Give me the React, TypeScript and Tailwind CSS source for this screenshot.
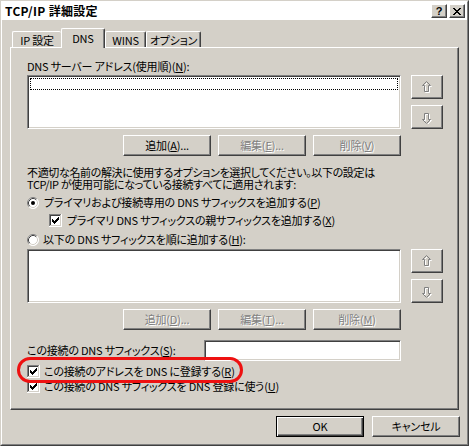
import React from "react";

const raised =
  "border border-t-white border-l-white border-r-[#404040] border-b-[#404040] shadow-[inset_-1px_-1px_0_#808080]";
const sunken =
  "border border-t-[#808080] border-l-[#808080] border-r-white border-b-white shadow-[inset_1px_1px_0_#404040,inset_-1px_-1px_0_#d4d0c8]";
const dis = "text-[#808080] [text-shadow:1px_1px_0_#ffffff]";

const CHECK = ["......#", ".....##", "#...###", "##.###.", "#####..", ".###...", "..#...."];

function Checkbox({ checked }: { checked: boolean }) {
  return (
    <svg width="13" height="13" viewBox="0 0 13 13" shapeRendering="crispEdges" className="shrink-0">
      <rect width="13" height="13" fill="#fff" />
      <rect x="0" y="0" width="12" height="1" fill="#808080" />
      <rect x="0" y="0" width="1" height="12" fill="#808080" />
      <rect x="1" y="1" width="10" height="1" fill="#404040" />
      <rect x="1" y="1" width="1" height="10" fill="#404040" />
      <rect x="12" y="0" width="1" height="13" fill="#fff" />
      <rect x="0" y="12" width="13" height="1" fill="#fff" />
      <rect x="11" y="1" width="1" height="11" fill="#d4d0c8" />
      <rect x="1" y="11" width="11" height="1" fill="#d4d0c8" />
      {checked &&
        CHECK.flatMap((row, y) =>
          row
            .split("")
            .map((c, x) =>
              c === "#" ? <rect key={`${x}-${y}`} x={x + 3} y={y + 3} width="1" height="1" fill="#000" /> : null
            )
        )}
    </svg>
  );
}

function Radio({ checked }: { checked: boolean }) {
  return (
    <svg width="12" height="12" viewBox="0 0 12 12" className="shrink-0">
      <circle cx="6" cy="6" r="5.5" fill="#fff" />
      <path d="M2.11 9.89 A5.5 5.5 0 0 1 9.89 2.11" stroke="#808080" fill="none" />
      <path d="M9.89 2.11 A5.5 5.5 0 0 1 2.11 9.89" stroke="#ffffff" fill="none" />
      <path d="M2.82 9.18 A4.5 4.5 0 0 1 9.18 2.82" stroke="#404040" fill="none" />
      <path d="M9.18 2.82 A4.5 4.5 0 0 1 2.82 9.18" stroke="#d4d0c8" fill="none" />
      {checked && <circle cx="6" cy="6" r="2" fill="#000" />}
    </svg>
  );
}

function Btn({ children, disabled, className = "" }: { children: React.ReactNode; disabled?: boolean; className?: string }) {
  return (
    <div
      className={`${raised} h-[21px] w-[88px] flex items-center justify-center bg-[#d4d0c8] leading-[13px] whitespace-nowrap ${
        disabled ? dis : "text-black"
      } ${className}`}
    >
      {children}
    </div>
  );
}

function ArrowBtn({ down }: { down?: boolean }) {
  const pts = "4.5,0.5 8.5,4.5 6.5,4.5 6.5,10.5 2.5,10.5 2.5,4.5 0.5,4.5";
  return (
    <div className={`${raised} w-[32px] h-[24px] flex items-center justify-center bg-[#d4d0c8]`}>
      <svg width="11" height="13" viewBox="0 0 11 13" className={down ? "-scale-y-100" : ""}>
        <g transform={down ? "translate(1,-1)" : "translate(1,1)"}>
          <polygon points={pts} stroke="#ffffff" fill="none" />
        </g>
        <polygon points={pts} stroke="#808080" fill="none" />
      </svg>
    </div>
  );
}

function ListRow({ focus }: { focus?: boolean }) {
  return (
    <div className="flex h-[54px] gap-[10px]">
      <div className={`${sunken} w-[374px] h-full bg-white p-[2px]`}>
        {focus && <div className="h-[12px] border border-dotted border-black" />}
      </div>
      <div className="flex flex-col gap-[6px]">
        <ArrowBtn />
        <ArrowBtn down />
      </div>
    </div>
  );
}

function Tab({ label, selected, className }: { label: string; selected?: boolean; className: string }) {
  return (
    <div
      className={`${className} flex justify-center whitespace-nowrap bg-[#d4d0c8] rounded-t-[2px] border-t border-l border-white leading-[13px] ${
        selected
          ? "h-[20px] mb-[-1px] pt-[3px] border-r border-r-[#404040] shadow-[inset_-1px_0_0_#808080]"
          : "h-[16px] pt-[2px]"
      }`}
    >
      {label}
    </div>
  );
}

export default function App() {
  return (
    <div className="w-[469px] h-[446px] bg-[#d4d0c8] border border-t-[#d4d0c8] border-l-[#d4d0c8] border-r-[#404040] border-b-[#404040] overflow-hidden text-black [font-family:'Noto_Sans_CJK_JP',sans-serif] [font-feature-settings:'palt'] text-[11px] tracking-[-0.2px]">
      <div className="h-full border border-t-white border-l-white border-r-[#808080] border-b-[#808080] flex flex-col">
        {/* Title bar */}
        <div className="h-[18px] bg-white flex items-center justify-between pl-[3px] pr-[2px]">
          <div className="font-bold text-[12px] leading-[14px] tracking-[0.3px]">TCP/IP 詳細設定</div>
          <div className="flex gap-[2px]">
            <div className={`${raised} w-[16px] h-[14px] bg-[#d4d0c8] flex items-center justify-center font-bold text-[11px] leading-[11px] tracking-normal [font-family:'Liberation_Sans',sans-serif]`}>
              ?
            </div>
            <div className={`${raised} w-[16px] h-[14px] bg-[#d4d0c8] flex items-center justify-center`}>
              <svg width="8" height="7" viewBox="0 0 8 7" shapeRendering="crispEdges">
                {[0, 1, 2, 3, 4, 5, 6].map((i) => (
                  <React.Fragment key={i}>
                    <rect x={i * 1} y={i} width="2" height="1" fill="#000" />
                    <rect x={6 - i} y={i} width="2" height="1" fill="#000" />
                  </React.Fragment>
                ))}
              </svg>
            </div>
          </div>
        </div>

        {/* Tabs */}
        <div className="mt-[8px] h-[19px] flex items-end pl-[10px] relative z-10">
          <Tab label="IP 設定" className="w-[49px]" />
          <Tab label="DNS" selected className="w-[44px]" />
          <Tab
            label="WINS"
            className="w-[41px] border-r border-r-[#404040] shadow-[inset_-1px_0_0_#808080]"
          />
          <Tab
            label="オプション"
            className="w-[55px] border-r border-r-[#404040] shadow-[inset_-1px_0_0_#808080]"
          />
        </div>

        {/* Panel */}
        <div className="ml-[8px] w-[449px] h-[363px] border border-t-white border-l-white border-r-[#404040] border-b-[#404040] shadow-[inset_-1px_-1px_0_#808080] pl-[16px] pt-[12px] flex flex-col">
          <div className="h-[13px] leading-[13px] whitespace-nowrap">
            DNS サーバー アドレス(使用順)(<u className="underline-offset-1">N</u>):
          </div>
          <div className="mt-[2px]">
            <ListRow focus />
          </div>
          <div className="mt-[6px] w-[374px] flex justify-end gap-[7px]">
            <Btn>
              追加(<u>A</u>)...
            </Btn>
            <Btn disabled>
              編集(<u>E</u>)...
            </Btn>
            <Btn disabled>
              削除(<u>V</u>)
            </Btn>
          </div>
          <div className="mt-[10px] leading-[12px] whitespace-nowrap tracking-[-0.35px]">
            不適切な名前の解決に使用するオプションを選択してください。以下の設定は
            <br />
            TCP/IP が使用可能になっている接続すべてに適用されます:
          </div>
          <div className="mt-[6px] h-[13px] flex items-center gap-[5px] whitespace-nowrap">
            <Radio checked />
            <span className="leading-[13px]">
              プライマリおよび接続専用の DNS サフィックスを追加する(<u>P</u>)
            </span>
          </div>
          <div className="mt-[5px] h-[13px] flex items-center gap-[5px] pl-[22px] whitespace-nowrap">
            <Checkbox checked />
            <span className="leading-[13px]">
              プライマリ DNS サフィックスの親サフィックスを追加する(<u>X</u>)
            </span>
          </div>
          <div className="mt-[6px] h-[13px] flex items-center gap-[4px] whitespace-nowrap">
            <Radio checked={false} />
            <span className="leading-[13px]">
              以下の DNS サフィックスを順に追加する(<u>H</u>):
            </span>
          </div>
          <div className="mt-[3px]">
            <ListRow />
          </div>
          <div className="mt-[6px] w-[374px] flex justify-end gap-[7px]">
            <Btn disabled>
              追加(<u>D</u>)...
            </Btn>
            <Btn disabled>
              編集(<u>T</u>)...
            </Btn>
            <Btn disabled>
              削除(<u>M</u>)
            </Btn>
          </div>
          <div className="mt-[10px] w-[374px] h-[21px] flex items-center justify-between whitespace-nowrap">
            <span className="leading-[13px]">
              この接続の DNS サフィックス(<u>S</u>):
            </span>
            <div className={`${sunken} w-[197px] h-[21px] bg-white`} />
          </div>
          <div className="mt-[4px] h-[13px] flex items-center gap-[4px] relative whitespace-nowrap">
            <Checkbox checked />
            <span className="leading-[13px]">
              この接続のアドレスを DNS に登録する(<u>R</u>)
            </span>
            <div className="absolute left-[-10px] top-[-8px] w-[226px] h-[26px] rounded-full border-[3px] border-[#ee1111]" />
          </div>
          <div className="mt-[2px] h-[13px] flex items-center gap-[4px] whitespace-nowrap">
            <Checkbox checked />
            <span className="leading-[13px]">
              この接続の DNS サフィックスを DNS 登録に使う(<u>U</u>)
            </span>
          </div>
        </div>

        {/* Bottom buttons */}
        <div className="mt-[6px] flex justify-end gap-[8px] pr-[7px]">
          <div className="w-[88px] h-[21px] border border-black shadow-[inset_1px_1px_0_#ffffff,inset_-1px_-1px_0_#404040,inset_-2px_-2px_0_#808080] flex items-center justify-center leading-[13px]">
            OK
          </div>
          <Btn>キャンセル</Btn>
        </div>
      </div>
    </div>
  );
}
